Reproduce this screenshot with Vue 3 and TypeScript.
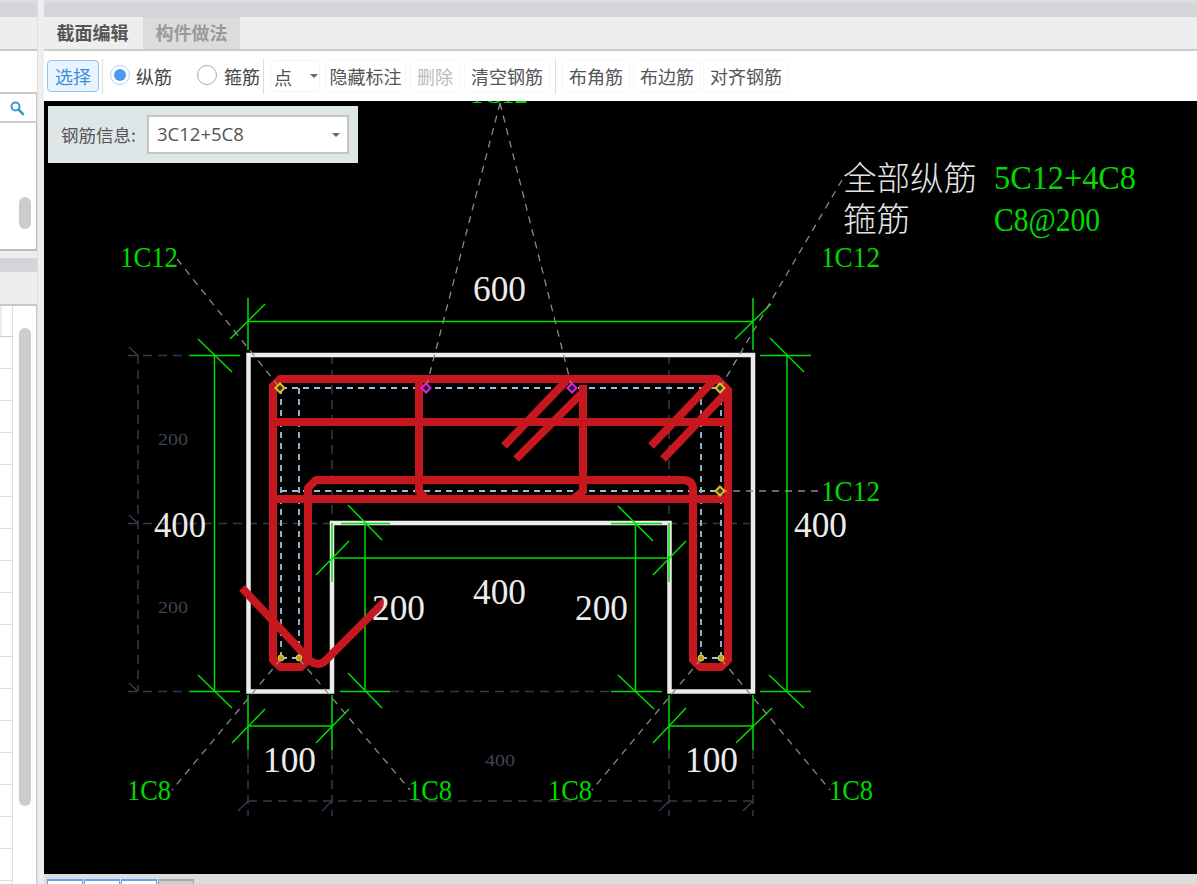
<script setup lang="ts">
type Seg = [number, number, number, number]

interface Label {
  text: string
  x: number
  y: number
  w: number
}

// green dimension lines and their slanted ticks
const dimLines: Seg[] = [
  [248, 321.5, 753, 321.5], [248, 298, 248, 350], [753, 298, 753, 350],
  [230, 339, 265, 304], [735, 339, 771, 304],
  [214.5, 355.5, 214.5, 691.5], [190, 355.5, 240, 355.5], [190, 691.5, 240, 691.5],
  [198, 339, 232, 372], [198, 675, 232, 708],
  [787, 355.5, 787, 691.5], [760, 355.5, 811, 355.5], [760, 691.5, 811, 691.5],
  [770, 338, 804, 372], [769, 675, 804, 708],
  [248, 726, 332, 726], [248, 695, 248, 750], [332, 695, 332, 750],
  [232, 743, 265, 709], [316, 743, 349, 709],
  [669, 726, 753, 726], [669, 695, 669, 750], [753, 695, 753, 750],
  [653, 743, 686, 708], [736, 743, 772, 708],
  [332, 558, 669, 558], [332, 523, 332, 582], [669, 523, 669, 582],
  [316, 575, 349, 541], [653, 575, 686, 541],
  [341, 523.5, 390, 523.5], [611, 523.5, 662, 523.5],
  [348, 505, 382, 540], [618, 506, 653, 541],
  [365, 523, 365, 691.5], [635.5, 523, 635.5, 691.5],
  [340, 691.5, 390, 691.5], [611, 691.5, 662, 691.5],
  [348, 673, 382, 708], [618, 675, 654, 709],
]

const leaders: Seg[] = [
  [177, 259, 280, 388], [842, 180, 720, 388],
  [500, 103, 426, 388], [500, 103, 572, 388],
  [720, 491, 820, 491],
  [281, 659, 172, 790], [299, 659, 410, 790],
  [701, 659, 592, 790], [721, 659, 830, 790],
]

const centerLines: Seg[] = [
  [332, 355, 332, 522], [669, 355, 669, 522],
  [128, 523.5, 750, 523.5], [128, 355.5, 190, 355.5], [128, 691.5, 190, 691.5],
  [390, 691.5, 610, 691.5], [138, 355, 138, 691],
  [248, 801, 753, 801], [248, 750, 248, 816], [332, 750, 332, 816],
  [669, 750, 669, 816], [753, 750, 753, 816],
]

const centerTicks: Seg[] = [
  [129, 347, 138, 355.5], [129, 515, 138, 523.5], [129, 683, 138, 691.5],
  [238, 811, 248, 801], [322, 811, 332, 801], [659, 811, 669, 801], [743, 811, 753, 801],
]

const stirrupDash: Seg[] = [
  [281, 388, 720, 388], [281, 491, 720, 491],
  [281, 388, 281, 658], [299, 388, 299, 658],
  [701, 388, 701, 658], [721, 388, 721, 658],
  [281, 658, 299, 658], [701, 658, 721, 658],
]

const rebars: Seg[] = [
  [273, 422, 728, 422], [273, 499, 728, 499],
  [570, 377, 504, 446], [581, 394, 516, 459],
  [717, 377, 651, 446], [726, 393, 663, 459],
]

const greenLabels: Label[] = [
  { text: '1C12', x: 470, y: 103, w: 58 },
  { text: '1C12', x: 120, y: 267, w: 58 },
  { text: '1C12', x: 821, y: 267, w: 59 },
  { text: '1C12', x: 821, y: 501, w: 59 },
  { text: '1C8', x: 127, y: 800, w: 44 },
  { text: '1C8', x: 408, y: 800, w: 44 },
  { text: '1C8', x: 548, y: 800, w: 44 },
  { text: '1C8', x: 829, y: 800, w: 44 },
]

const whiteLabels: Label[] = [
  { text: '600', x: 473, y: 301, w: 53 },
  { text: '400', x: 154, y: 537, w: 52 },
  { text: '400', x: 794, y: 537, w: 53 },
  { text: '400', x: 473, y: 604, w: 53 },
  { text: '200', x: 372, y: 620, w: 53 },
  { text: '200', x: 575, y: 620, w: 53 },
  { text: '100', x: 263, y: 772, w: 53 },
  { text: '100', x: 685, y: 772, w: 53 },
]

const dimGrey: Label[] = [
  { text: '200', x: 158, y: 445, w: 30 },
  { text: '200', x: 158, y: 613, w: 30 },
  { text: '400', x: 485, y: 766, w: 30 },
]

const yellowMarks: [number, number][] = [[280, 388], [720, 388], [720, 491]]
const magentaMarks: [number, number][] = [[426, 388], [572, 388]]
const endDots: [number, number][] = [[281, 658], [299, 658], [701, 658], [721, 658]]

const diamond = (x: number, y: number) =>
  `${x - 4.5},${y} ${x},${y - 4.5} ${x + 4.5},${y} ${x},${y + 4.5}`

const tableRows = [0, 1, 2, 3, 4, 5, 6, 7, 8, 9, 10, 11, 12, 13, 14, 15, 16]
</script>

<template>
  <div class="app">
    <aside class="side">
      <div class="strip"></div>
      <div class="tabbar"></div>
      <div class="panel-top"></div>
      <div class="search">
        <svg width="16" height="16" viewBox="0 0 16 16" class="search-ico">
          <circle cx="6.5" cy="6.5" r="4" fill="none" stroke="#3b9ac6" stroke-width="2" />
          <path d="M9.5 9.5 L14 14" stroke="#3b9ac6" stroke-width="2.6" stroke-linecap="round" />
        </svg>
      </div>
      <div class="panel-list">
        <span class="thumb thumb-short"></span>
      </div>
      <div class="gap"></div>
      <div class="strip"></div>
      <div class="tabbar"></div>
      <div class="table">
        <div class="rows">
          <div class="head-cell"></div>
          <div v-for="r in tableRows" :key="r" class="row"></div>
        </div>
        <div class="table-bar">
          <span class="thumb thumb-long"></span>
        </div>
      </div>
    </aside>

    <div class="splitter"></div>

    <main class="main">
      <div class="strip"></div>
      <div class="tabbar tabs">
        <span class="tab active">截面编辑</span>
        <span class="tab">构件做法</span>
      </div>

      <div class="toolbar">
        <button class="btn select">选择</button>
        <i class="sep sep-a"></i>
        <span class="radio on"></span>
        <span class="radio-text first">纵筋</span>
        <span class="radio second"></span>
        <span class="radio-text">箍筋</span>
        <i class="sep sep-b"></i>
        <span class="point">点<b class="caret"></b></span>
        <button class="btn hide">隐藏标注</button>
        <button class="btn del">删除</button>
        <button class="btn clear">清空钢筋</button>
        <i class="sep sep-c"></i>
        <button class="btn corner">布角筋</button>
        <button class="btn edge">布边筋</button>
        <button class="btn align">对齐钢筋</button>
      </div>

      <div class="canvas">
        <svg class="drawing" width="1153" height="773" viewBox="44 101 1153 773">
          <!-- centre lines -->
          <g stroke="#343a4a" stroke-width="1.5" fill="none">
            <line v-for="(l, i) in centerLines" :key="i" :x1="l[0]" :y1="l[1]" :x2="l[2]" :y2="l[3]" stroke-dasharray="9 6" />
            <line v-for="(l, i) in centerTicks" :key="i" :x1="l[0]" :y1="l[1]" :x2="l[2]" :y2="l[3]" />
          </g>

          <!-- section outline -->
          <path d="M248.5 355 H753 V691.5 H669.5 V523 H332 V691.5 H248.5 Z" fill="none" stroke="#ececec" stroke-width="4.5" />

          <!-- dimensions -->
          <g stroke="#00e000" stroke-width="1.5">
            <line v-for="(l, i) in dimLines" :key="i" :x1="l[0]" :y1="l[1]" :x2="l[2]" :y2="l[3]" />
          </g>

          <!-- stirrup centre lines -->
          <g stroke="#9cc0dc" stroke-width="1.8" stroke-dasharray="6 5">
            <line v-for="(l, i) in stirrupDash" :key="i" :x1="l[0]" :y1="l[1]" :x2="l[2]" :y2="l[3]" />
          </g>

          <!-- rebars -->
          <g stroke="#c8181f" fill="none" stroke-width="8">
            <path d="M308 660 V488 L316 480 H683 Q693 480 693 490 V660 L700 667 H721 L728 660 V390 L717 379 H280 L273 386 V660 L280 667 H301 L308 660" stroke-linejoin="round" />
            <line v-for="(l, i) in rebars" :key="i" :x1="l[0]" :y1="l[1]" :x2="l[2]" :y2="l[3]" />
            <path d="M419 379 V491 L426 499" />
            <path d="M583 385 V491 L573 499" />
            <path d="M242 588 L305 655 Q314 668 324 662 L385 601" stroke-width="8" stroke-linejoin="round" />
          </g>

          <!-- leaders -->
          <g stroke="#8a8a8a" stroke-width="1.3" stroke-dasharray="7 6">
            <line v-for="(l, i) in leaders" :key="i" :x1="l[0]" :y1="l[1]" :x2="l[2]" :y2="l[3]" />
          </g>

          <!-- anchor points -->
          <polygon v-for="(p, i) in yellowMarks" :key="i" :points="diamond(p[0], p[1])" fill="#333" stroke="#e0c020" stroke-width="2" />
          <polygon v-for="(p, i) in magentaMarks" :key="i" :points="diamond(p[0], p[1])" fill="#222" stroke="#e020e0" stroke-width="2" />
          <circle v-for="(p, i) in endDots" :key="i" :cx="p[0]" :cy="p[1]" r="3" fill="#b8a030" stroke="#f0d030" />

          <!-- labels -->
          <text v-for="(t, i) in dimGrey" :key="i" class="t-grey" :x="t.x" :y="t.y" :textLength="t.w" lengthAdjust="spacingAndGlyphs">{{ t.text }}</text>
          <text v-for="(t, i) in greenLabels" :key="i" class="t-green" :x="t.x" :y="t.y" :textLength="t.w" lengthAdjust="spacingAndGlyphs">{{ t.text }}</text>
          <text v-for="(t, i) in whiteLabels" :key="i" class="t-white" :x="t.x" :y="t.y" :textLength="t.w" lengthAdjust="spacingAndGlyphs">{{ t.text }}</text>

          <text class="t-title" x="843" y="190">全部纵筋</text>
          <text class="t-title" x="843" y="231">箍筋</text>
          <text class="t-sum" x="994" y="189" textLength="142" lengthAdjust="spacingAndGlyphs">5C12+4C8</text>
          <text class="t-sum" x="994" y="231" textLength="106" lengthAdjust="spacingAndGlyphs">C8@200</text>
        </svg>

        <div class="info">
          <span class="info-label">钢筋信息:</span>
          <div class="info-select">3C12+5C8<b class="caret"></b></div>
        </div>
      </div>

      <div class="footer">
        <span class="page"></span>
        <span class="page"></span>
        <span class="page"></span>
        <span class="page off"></span>
      </div>
    </main>
  </div>
</template>

<style>
html,
body {
  margin: 0;
  background: #eee;
}
</style>

<style scoped>
.app {
  display: flex;
  width: 1197px;
  height: 884px;
  overflow: hidden;
  background: #eee;
  font-family: "Noto Sans CJK SC", "Noto Sans", sans-serif;
  color: #555;
}
.side {
  width: 37px;
  display: flex;
  flex-direction: column;
  flex: none;
}
.splitter {
  width: 7px;
  flex: none;
  background: #eee;
  border-left: 1px solid #ddd;
  box-sizing: border-box;
}
.main {
  flex: 1;
  min-width: 0;
  display: flex;
  flex-direction: column;
}
.strip {
  height: 14px;
  flex: none;
  background: #d3d5da;
  border-top: 3px solid #dedede;
}
.side > .strip:nth-child(7) {
  border-top: 0;
}
.tabbar {
  height: 32px;
  flex: none;
  background: #eee;
  border-bottom: 2px solid #c8c8c8;
  display: flex;
}
.tabs {
  border-bottom-color: #ccc;
}
.tab {
  width: 97px;
  height: 32px;
  box-sizing: border-box;
  text-align: center;
  font-size: 18px;
  line-height: 30px;
  font-weight: 700;
  color: #9a9a9a;
  background: #dcdcdc;
  margin-left: 2px;
}
.tab.active {
  margin-left: 0;
  color: #555;
  background: #eee;
}
.panel-top {
  height: 41px;
  flex: none;
  background: #fff;
}
.search {
  height: 27px;
  flex: none;
  background: #fff;
  border-top: 2px solid #ccc;
  border-bottom: 2px solid #ccc;
  border-right: 1px solid #ccc;
  display: flex;
  align-items: center;
  padding-left: 9px;
}
.search-ico {
  display: block;
}
.panel-list {
  height: 126px;
  flex: none;
  background: #fff;
  border-right: 1px solid #bbb;
  border-bottom: 2px solid #bbb;
  position: relative;
}
.thumb {
  display: block;
  width: 12px;
  background: #ccc;
  border-radius: 6px;
}
.thumb-short {
  position: absolute;
  left: 19px;
  top: 74px;
  height: 32px;
}
.gap {
  height: 7px;
  flex: none;
}
.table {
  flex: 1;
  display: flex;
  background: #fff;
  border-right: 1px solid #ccc;
  min-height: 0;
}
.rows {
  width: 13px;
  flex: none;
  border-right: 1px solid #ddd;
  box-sizing: border-box;
}
.head-cell {
  height: 30px;
  background: linear-gradient(90deg, #dbe9f7 0, #fff 3px);
  border-bottom: 1px solid #ccc;
}
.row {
  height: 31px;
  border-bottom: 1px solid #ddd;
}
.table-bar {
  flex: 1;
  padding: 22px 5px 0 6px;
}
.thumb-long {
  height: 478px;
}
.toolbar {
  height: 50px;
  flex: none;
  background: #fff;
  position: relative;
  display: flex;
  align-items: center;
  font-size: 18px;
}
.btn {
  position: absolute;
  top: 9px;
  height: 32px;
  padding: 0;
  border: 1px solid #f6f6f6;
  border-radius: 4px;
  background: #fff;
  font: inherit;
  color: #555;
  white-space: nowrap;
}
.select {
  left: 3px;
  width: 52px;
  border: 1px solid #8cc4f2;
  background: #e8f3ff;
  color: #3f8fd8;
}
.hide { left: 281px; width: 81px; }
.del { left: 366px; width: 50px; color: #bbb; }
.clear { left: 420px; width: 86px; }
.corner { left: 518px; width: 68px; }
.edge { left: 589px; width: 68px; }
.align { left: 659px; width: 86px; }
.sep {
  position: absolute;
  top: 8px;
  width: 1px;
  height: 35px;
  background: #ddd;
}
.sep-a { left: 58px; }
.sep-b { left: 219px; }
.sep-c { left: 511px; }
.radio {
  position: absolute;
  top: 14px;
  width: 20px;
  height: 20px;
  box-sizing: border-box;
  border: 1px solid #aaa;
  border-radius: 50%;
  left: 66px;
  background: #fff;
}
.radio.second {
  left: 153px;
}
.radio.on::after {
  content: "";
  position: absolute;
  left: 3px;
  top: 3px;
  width: 12px;
  height: 12px;
  border-radius: 50%;
  background: #4a9cf0;
}
.radio.on {
  border-color: #b8d2ea;
}
.radio-text {
  position: absolute;
  left: 180px;
  top: 10px;
  line-height: 30px;
  color: #444;
}
.radio-text.first {
  left: 92px;
}
.point {
  position: absolute;
  left: 226px;
  top: 9px;
  width: 50px;
  height: 32px;
  box-sizing: border-box;
  border: 1px solid #f4f4f4;
  border-radius: 4px;
  padding-left: 3px;
  line-height: 32px;
}
.caret {
  position: absolute;
  width: 0;
  height: 0;
  border-left: 4px solid transparent;
  border-right: 4px solid transparent;
  border-top: 4px solid #666;
}
.point .caret {
  left: 39px;
  top: 13px;
}
.canvas {
  flex: 1;
  min-height: 0;
  position: relative;
  background: #000;
  overflow: hidden;
}
.drawing {
  display: block;
}
.t-green {
  font-family: "Liberation Serif", serif;
  font-size: 30px;
  fill: #00d800;
}
.t-white {
  font-family: "Liberation Serif", serif;
  font-size: 36px;
  fill: #ececec;
}
.t-grey {
  font-family: "Liberation Serif", serif;
  font-size: 16px;
  fill: #3e4452;
}
.t-title {
  font-family: "Noto Sans CJK SC", sans-serif;
  font-size: 33.5px;
  font-weight: 300;
  fill: #e4e4e4;
}
.t-sum {
  font-family: "Liberation Serif", serif;
  font-size: 33px;
  fill: #00d800;
}
.info {
  position: absolute;
  left: 4px;
  top: 5px;
  width: 310px;
  height: 57px;
  box-sizing: border-box;
  background: #dfe6e8;
  display: flex;
  align-items: center;
  padding-left: 13px;
  gap: 9px;
}
.info-label {
  width: 77px;
  flex: none;
  font-size: 17.5px;
  color: #555;
  white-space: nowrap;
}
.info-select {
  position: relative;
  width: 202px;
  height: 39px;
  box-sizing: border-box;
  background: #fff;
  border: 2px solid #c4c4c4;
  padding-left: 8px;
  line-height: 34px;
  font-family: "Open Sans", sans-serif;
  font-size: 18.5px;
  color: #555;
}
.info-select .caret {
  right: 7px;
  top: 16px;
}
.footer {
  height: 10px;
  flex: none;
  background: #ddd;
  display: flex;
  gap: 1px;
  padding: 5px 0 0 3px;
  box-sizing: border-box;
}
.page {
  width: 36px;
  height: 5px;
  box-sizing: border-box;
  background: #fff;
  border-top: 2px solid #5aa9f0;
  border-left: 1px solid #5aa9f0;
  border-right: 1px solid #5aa9f0;
}
.page.off {
  background: #ccc;
  border-color: #aaa;
}
</style>
